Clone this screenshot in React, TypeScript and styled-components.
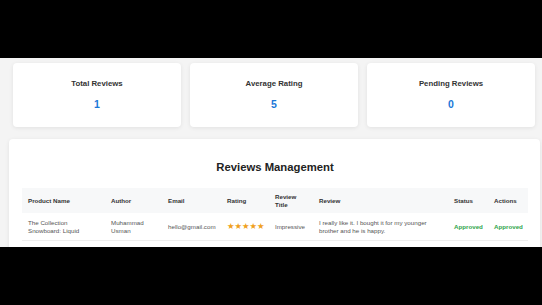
import React from "react";
import styled, { createGlobalStyle } from "styled-components";

const Global = createGlobalStyle`
  html, body { margin: 0; padding: 0; background: #000; }
  body { font-family: "Liberation Sans", Arial, sans-serif; }
`;

const Frame = styled.div`
  width: 542px;
  height: 305px;
  padding-top: 58px;
  box-sizing: border-box;
  background: #000;
`;

const Content = styled.div`
  height: 189px;
  overflow: hidden;
  background: #f4f4f4;
  padding: 5px 2px 0 9px;
  box-sizing: border-box;
`;

const CardRow = styled.div`
  display: grid;
  grid-template-columns: repeat(3, 168px);
  gap: 9px;
  margin-left: 4px;
`;

const Card = styled.div`
  background: #fff;
  border-radius: 4px;
  height: 64px;
  box-shadow: 0 1px 4px rgba(0, 0, 0, 0.08);
  display: flex;
  flex-direction: column;
  align-items: center;
  padding-top: 16px;
  box-sizing: border-box;
`;

const CardTitle = styled.div`
  font-size: 7.8px;
  font-weight: bold;
  color: #333;
  line-height: 10px;
`;

const CardValue = styled.div`
  font-size: 10.5px;
  font-weight: bold;
  color: #1a78d8;
  line-height: 12px;
  margin-top: 9px;
`;

const Panel = styled.div`
  margin-top: 12px;
  background: #fff;
  border-radius: 4px;
  box-shadow: 0 1px 4px rgba(0, 0, 0, 0.08);
  padding: 20px 12px 20px 13px;
  height: 200px;
  box-sizing: border-box;
`;

const Heading = styled.h2`
  margin: 0 0 13px;
  text-align: center;
  font-size: 11.3px;
  line-height: 16px;
  font-weight: bold;
  color: #222;
`;

const Table = styled.table`
  width: 506px;
  border-collapse: collapse;
  table-layout: fixed;
  font-size: 6.2px;
`;

const HeadCell = styled.th`
  background: #f7f8f9;
  color: #333;
  font-weight: bold;
  text-align: left;
  padding: 0 6px;
  height: 25px;
  line-height: 8px;
`;

const Cell = styled.td`
  color: #555;
  padding: 0 6px;
  height: 27px;
  line-height: 8px;
  border-bottom: 1px solid #eee;
  vertical-align: middle;
`;

const Stars = styled.span`
  color: #f0a020;
  font-family: "DejaVu Sans", sans-serif;
  font-size: 8.4px;
`;

const Status = styled.span`
  color: #2ea44a;
  font-weight: bold;
`;

const cols = [83, 57, 59, 48, 44, 135, 40, 40];

export default function App() {
  return (
    <>
      <Global />
      <Frame>
        <Content>
          <CardRow>
            <Card>
              <CardTitle>Total Reviews</CardTitle>
              <CardValue>1</CardValue>
            </Card>
            <Card>
              <CardTitle>Average Rating</CardTitle>
              <CardValue>5</CardValue>
            </Card>
            <Card>
              <CardTitle>Pending Reviews</CardTitle>
              <CardValue>0</CardValue>
            </Card>
          </CardRow>
          <Panel>
            <Heading>Reviews Management</Heading>
            <Table>
              <colgroup>
                {cols.map((w, i) => (
                  <col key={i} style={{ width: w }} />
                ))}
              </colgroup>
              <thead>
                <tr>
                  <HeadCell>Product Name</HeadCell>
                  <HeadCell>Author</HeadCell>
                  <HeadCell>Email</HeadCell>
                  <HeadCell>Rating</HeadCell>
                  <HeadCell>Review Title</HeadCell>
                  <HeadCell>Review</HeadCell>
                  <HeadCell>Status</HeadCell>
                  <HeadCell>Actions</HeadCell>
                </tr>
              </thead>
              <tbody>
                <tr>
                  <Cell>The Collection Snowboard: Liquid</Cell>
                  <Cell>Muhammad Usman</Cell>
                  <Cell>hello@gmail.com</Cell>
                  <Cell>
                    <Stars>★★★★★</Stars>
                  </Cell>
                  <Cell>Impressive</Cell>
                  <Cell>I really like it. I bought it for my younger brother and he is happy.</Cell>
                  <Cell>
                    <Status>Approved</Status>
                  </Cell>
                  <Cell>
                    <Status>Approved</Status>
                  </Cell>
                </tr>
              </tbody>
            </Table>
          </Panel>
        </Content>
      </Frame>
    </>
  );
}
